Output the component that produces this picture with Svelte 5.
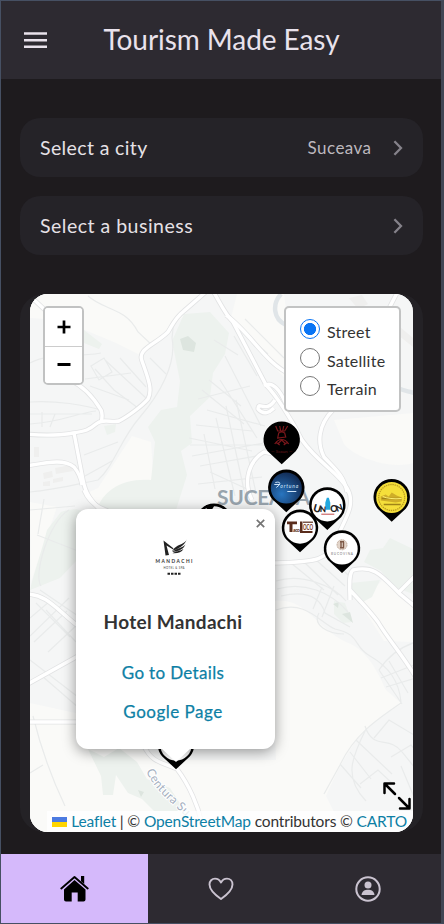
<script>
  const pins = [
    { x: 214, y: 522, kind: 'plain' },
    { x: 176, y: 745, kind: 'plain' },
    { x: 281.7, y: 440, kind: 'crown' },
    { x: 286.3, y: 488, kind: 'blue' },
    { x: 391.7, y: 497.5, kind: 'gold' },
    { x: 327.3, y: 505.7, kind: 'union' },
    { x: 300, y: 528, kind: 'taco' },
    { x: 342, y: 548.8, kind: 'hotel' }
  ];
  const casing = [
    'M26 434C45 436 64 435 73 433C86 431 89 430 96 424C103 418 111 423 119 421C127 417 141 407 148 399C153 390 148 378 142 361C137 349 155 345 168 332C173 324 175 318 184 311L208 290',
    'M70 380C83 386 92 395 101 410C103 415 102 419 101 422M74 433L83 480C86 496 91 500 109 520M26 466C50 462 64 459 74 467C79 473 81 479 82 485',
    'M26 594C47 594 57 610 78 626M26 685L78 656M26 722H82M30 296L45 310',
    'M210 286C219 300 224 313 233 322L266 385C276 395 292 420 302 440C318 463 338 472 347 488C357 505 344 520 336 540C327 560 318 562 275 563',
    'M226 315C250 332 266 364 290 374L320 405M333 410C318 425 317 443 324 457C334 468 344 475 347 492M264 386C272 380 280 390 286 404M275 400C266 414 258 400 258 409C264 416 270 412 274 408',
    'M252 500C242 480 250 460 264 452L285 456M350 600C350 588 348 574 353 570C375 565 382 576 400 594L418 609M350 590C362 603 370 611 378 622C388 639 405 658 418 681M399 592L416 575',
    'M144 746C152 763 162 762 177 769C190 786 198 807 201 820M382 322L398 291M84 490C88 500 95 507 108 511'
  ];
  const lanes = [
    'M88 296C105 311 125 307 138 332L153 346M174 320L172 338C177 364 159 395 140 417C120 440 114 466 98 480C78 484 54 490 30 492',
    'M30 402C54 400 86 405 104 411M30 414H92M30 424C62 422 77 413 96 411M42 412V427M55 414L50 427M84 455L118 442M85 476L112 461M95 369L114 390L138 408M105 360L146 398M85 379L131 373M91 366L104 358L112 372L99 380Z',
    'M30 363C51 352 73 358 101 353M120 358L146 387M90 386L129 400M150 358L166 374M30 510L75 506M37 535L78 551M44 499L38 534M41 586C33 575 49 521 69 510',
    'M40 590L78 616M36 603L70 637M30 618L50 601M30 636L69 598M34 642L67 611M48 652L78 624M30 660L78 697M42 676L79 708M46 610L76 642M33 716C43 757 54 783 65 806M30 773L43 765',
    'M190 445H280M192 456L264 443M200 466L268 454M198 484L262 477M204 434L215 489M216 418L235 496M226 406L245 495M236 400L256 493M196 425L252 431M189 438L252 451M207 410L265 426M210 472L258 494',
    'M220 380L257 438M225 356L261 426M198 399L250 386M209 380L241 406M202 390L244 424M234 336L257 376M237 326L268 354M245 319L284 358M214 340L238 355',
    'M276 581C302 573 334 586 346 601M277 589C304 581 331 592 348 612M281 596C307 590 320 597 325 613L350 627M291 563L324 590M304 562L338 595M315 559L345 586M323 550L348 575M322 587L313 609M334 586L322 617',
    'M276 610C306 599 320 623 335 629C362 635 352 646 370 656C389 667 399 681 401 702M319 613C312 625 328 634 344 634M379 670C389 655 403 646 416 642M379 670L402 704M389 661L408 693M381 678L414 665M386 687L416 678',
    'M401 703C376 720 354 735 340 765L324 794M365 726C373 751 389 735 402 752L420 774M366 729C352 757 343 777 366 801M356 740L392 774M350 752L371 779M340 764L361 788M374 738L389 720L414 735M391 757L411 745L419 754M401 766L414 797M360 784L378 770L394 785'
  ];
  const choices = ['Street', 'Satellite', 'Terrain'];
  let layer = $state('Street');
</script>

{#snippet chevron()}
  <svg class="chev" viewBox="0 0 10 16" width="10" height="16"><path d="M1.400 1.200 8 8l-6.600 6.800" fill="none" stroke="#85828a" stroke-width="2.300" /></svg>
{/snippet}

<div class="app">
  <header>
    <svg width="23" height="16" viewBox="0 0 23 16"><path d="M0 1.500H23M0 8.200H23M0 14.800H23" stroke="#e9e2ec" stroke-width="2.400" /></svg>
    <h1>Tourism Made Easy</h1>
  </header>

  <main>
    <button class="row"><span class="label city">Select a city</span><span class="value">Suceava</span>{@render chevron()}</button>
    <button class="row"><span class="label biz">Select a business</span>{@render chevron()}</button>

    <section class="card">
      <div class="map">
        <svg class="tiles" viewBox="30 294 383 538" width="383" height="538">
          <defs>
            <radialGradient id="sea" cx=".35" cy=".7" r=".8"><stop offset="0" stop-color="#2875c0" /><stop offset="1" stop-color="#10254b" /></radialGradient>
          </defs>
          <rect x="30" y="294" width="383" height="538" fill="#f5f6f6" />
          <g fill="#fafaf8">
            <path d="M84 294H204L170 330L140 355L116 343L85 330L60 320L30 318V294Z" />
            <path d="M98 488L132 436L151 442L154 487L122 488L99 509L83 495Z" />
            <path d="M237 294H284L296 390L258 350L231 318Z" />
            <path d="M334 420L413 413V463C390 470 354 457 344 444Z" />
            <path d="M270 602C305 594 313 626 346 642C369 650 379 676 386 690L402 704C371 720 351 738 326 796L344 832H30V703L80 714L160 760H276Z" />
            <path d="M361 605L382 580L413 602V642L384 641Z" />
            <path d="M30 502L57 507L31 582Z" />
          </g>
          <g fill="#edf2ee">
            <path d="M184 314L210 312L229 333L225 354L213 373L210 397L190 416L192 443L181 451L187 475L176 510H97C102 492 121 478 151 480L155 442L148 427L161 410L177 407L180 381L172 341Z" />
            <path d="M61 512C82 505 89 511 86 533L77 560L60 578L30 590C36 566 42 550 47 530Z" />
            <path d="M364 562L370 550L383 548L390 538L413 549V594L394 587L381 571Z" />
            <path d="M350 583L380 580L372 597L359 604L350 592Z" />
            <path d="M88 749L104 757L119 748L137 762L147 779L170 788L185 811H154L142 799L128 793L116 775L113 795H103L101 776Z" />
            <path d="M84 330L102 344L99 349L84 343ZM104 426L116 424L115 432L107 435ZM334 601L345 603L352 622L343 623L334 614Z" />
          </g>
          <path d="M180 339L188 336L196 343L194 352L183 350ZM342 614L350 612L353 623ZM333 604L339 602L338 608ZM138 790L144 792L141 797Z" fill="#dde5df" />
          <path d="M281 294C272 304 273 319 286 325M398 388C404 391 408 391 414 393" fill="none" stroke="#e0e5e8" stroke-width="4.500" />
          <g fill="#efefee"><path d="M34 447h5v10h-5zM43 473l9-2 1 6-9 2zM55 468l16-3 2 6-17 3zM43 482l7-1v5h-7zM53 479l10-2v4l-10 2zM400 327l13 11v9l-15-12zM349 298l13-3 6 9-10 5z" /></g>
          <g fill="none" stroke="#e9ebeb" stroke-width="1.200">{#each lanes as d}<path {d} />{/each}</g>
          <g fill="none" stroke="#e2e3e4" stroke-width="5" stroke-linejoin="round">{#each casing as d}<path {d} />{/each}</g>
          <g fill="none" stroke="#fff" stroke-width="3.400" stroke-linejoin="round">{#each casing as d}<path {d} />{/each}</g>
          <text x="217" y="505" textLength="93" font-size="21" font-weight="700" fill="#98a4ad">SUCEAVA</text>
          <path id="ring" d="M146 771C154 789 167 799 192 822" fill="none" />
          <text font-size="12" fill="#a5afc0" stroke="#fff" stroke-width="2" paint-order="stroke" letter-spacing=".3"><textPath href="#ring">Centura Su</textPath></text>

          {#each pins as p}
            <g transform="translate({p.x} {p.y})">
              <path d="M-14 11.300 0 24.200 14 11.300A18.200 18.200 0 1 0-14 11.300Z" fill="#000" />
              {#if p.kind === 'crown'}
                <g fill="none" stroke="#7a171b" stroke-width="1.200"><path d="M-6-14-4-9H3L6-14M-2-14-1-9M2-14 1-9M-3-7Q0-9 3-7L4-3-4-2ZM-7 4C-3-2 3-2 7 4M-4 4 0 0 4 4M-6 2-2 5M2 5 6 2" /></g>
                <text y="13" text-anchor="middle" font-size="4.500" fill="#6d171b">— Scaun —</text>
              {:else if p.kind === 'blue'}
                <circle r="15.500" fill="url(#sea)" />
                <path d="M-12-3.500H-7M-11-5.500Q-5-7-7-3L-10-.5M1 3.500H10" stroke="#cfe5fa" fill="none" />
                <text x="3" y="-.5" text-anchor="middle" font-size="5" font-style="italic" textLength="18" fill="#d9ebfc">ortuna</text>
              {:else if p.kind === 'gold'}
                <circle r="15.500" fill="#f5df3a" />
                <circle r="13" fill="none" stroke="#bd9f20" stroke-width="1.300" stroke-dasharray="1.400 .8" />
                <path d="M-11 3V-1L-6-3-3-1 0-5 5-2 10 0V4L4 5Z" fill="#cfae28" /><path d="M-10 1H10M-8 7H9" stroke="#a08418" stroke-width="1.300" /><path d="M-9-1Q-2 2 10 1" stroke="#fff176" fill="none" />
              {:else if p.kind === 'union'}
                <circle r="15.700" fill="#fff" />
                <path d="M-2 4V-3L-.5-8H1.500L3-3V4Z" fill="#22a8df" />
                <g font-size="10.500" font-weight="900" fill="#222" text-anchor="middle">
                  <text transform="translate(-11 6.500) rotate(16)">U</text><text transform="translate(-4.500 6.500) rotate(3)" font-size="8">N</text><text transform="translate(6.500 6)" font-size="9">O</text><text transform="translate(13 5) rotate(-20)" font-size="9">N</text>
                </g>
                <path d="M-6 8.500H7" stroke="#c24c4c" stroke-width="1" />
              {:else if p.kind === 'taco'}
                <circle r="15.700" fill="#fff" />
                <path d="M-13-6.500H-3V-3.800H-13ZM-10.500-4H-7.500V4H-10.500ZM0-6.500H2.500V3H12.500V5H0Z" fill="#5a2d1c" />
                <text x="-7" y="3.500" font-size="5" font-weight="900" textLength="7" fill="#5a2d1c">aco</text>
                <text x="3" y="1.500" font-size="7.500" font-weight="900" textLength="10" lengthAdjust="spacingAndGlyphs" fill="#7b3d2a">OCO</text>
                <path d="M3-5.800H13" stroke="#5a2d1c" stroke-width="1.200" />
              {:else if p.kind === 'hotel'}
                <circle r="15.700" fill="#fff" />
                <circle cy="-4" r="5" fill="#e3d5ca" stroke="#b8a08e" stroke-dasharray="1 .7" /><path d="M-2-7H2M-2-1H2M-1-7V-1M1.500-7V-1" stroke="#7d5846" stroke-width="1.400" />
                <text y="6.500" text-anchor="middle" font-size="3.200" textLength="22" fill="#777">BUCOVINA</text>
              {:else}
                <circle r="15.700" fill="#fff" />
                <path d="M-8-14Q-3-9 0-15.700L-2-17H-8Z" fill="#000" />
              {/if}
            </g>
          {/each}
        </svg>

        <div class="zoomer">
          <button aria-label="Zoom in"><svg width="14" height="14" viewBox="0 0 14 14"><path d="M.5 7H13.500M7 .5V13.500" stroke="#000" stroke-width="2.700" /></svg></button>
          <button aria-label="Zoom out"><svg width="14" height="14" viewBox="0 0 14 14"><path d="M.5 6.500H13.500" stroke="#000" stroke-width="2.800" /></svg></button>
        </div>

        <div class="layers">
          {#each choices as c}
            <label><input type="radio" name="layer" value={c} bind:group={layer} /><span>{c}</span></label>
          {/each}
        </div>

        <article class="popup">
          <svg class="close" width="9" height="9" viewBox="0 0 9 9"><path d="M.8.8 8.200 8.200M8.200.8.8 8.200" stroke="#757575" stroke-width="1.700" /></svg>
          <svg class="logo" width="40" height="38" viewBox="0 0 40 38">
            <path d="M9.500 1.500 19 9 20 11 12.500 6.500 15 16 11.500 16.500ZM33 0C31 5 25 5 20.500 9L18 12C23 10 30 8 33 0ZM31.500 5.500C28 9 23 9.500 18 13 24 12.200 29 11 31.500 5.500ZM29.500 10C25 12.500 22 12 18.500 14.200 24 14.500 27.500 13.500 29.500 10Z" fill="#222" />
            <text x="1.500" y="23.700" font-size="4.800" font-weight="700" textLength="37" fill="#333">MANDACHI</text>
            <text x="9.500" y="29.500" font-size="2.800" textLength="21" fill="#444">HOTEL &amp; SPA</text>
            <path d="M13.500 34.700H27" stroke="#222" stroke-width="2" stroke-dasharray="2.500 1" />
          </svg>
          <h2>Hotel Mandachi</h2>
          <a class="details" href="#details">Go to Details</a>
          <a class="google" href="#google">Google Page</a>
          <svg class="tip" width="28" height="14" viewBox="0 0 28 14"><path d="M0 0H28L14 13Z" fill="#fff" /></svg>
        </article>

        <svg class="expand" width="28" height="28" viewBox="0 0 28 28"><path d="M1.500 11V1.500H11M2 2 12 12M16 16 26 26M17 26.500H26.500V17" fill="none" stroke="#000" stroke-width="2.500" stroke-linecap="round" stroke-linejoin="round" /></svg>

        <div class="credit">
          <svg width="15" height="10" viewBox="0 0 15 10"><path d="M0 0H15V5H0Z" fill="#4c7be1" /><path d="M0 5H15V10H0Z" fill="#ffd500" /></svg>
          <span><a href="#leaflet">Leaflet</a> | © <a href="#osm">OpenStreetMap</a> contributors © <a href="#carto">CARTO</a></span>
        </div>
      </div>
    </section>
  </main>

  <nav>
    <button class="on" aria-label="Home"><svg width="29" height="27" viewBox="0 0 29 27"><path d="M1.300 13.500 14.500 2 27.700 13.500" fill="none" stroke="#000" stroke-width="1.900" stroke-linecap="round" stroke-linejoin="round" /><path d="M21 1H24.200V9L21 6.200ZM14.500 5 25.500 14.500V24.500Q25.500 26.500 23.500 26.500H17.700V17.500H11.700V26.500H6Q4 26.500 4 24.500V14.500Z" fill="#000" /></svg></button>
    <button aria-label="Favourites"><svg width="26" height="24" viewBox="0 0 26 24"><path d="M13 22C8 18.500 1.500 13.500 1.500 7.500 1.500 4 4 1.600 7 1.600 9.600 1.600 11.800 3.200 13 5.500 14.200 3.200 16.400 1.600 19 1.600 22 1.600 24.500 4 24.500 7.500 24.500 13.500 18 18.500 13 22Z" fill="none" stroke="#cac3d0" stroke-width="1.900" stroke-linejoin="round" /></svg></button>
    <button aria-label="Profile"><svg width="26" height="26" viewBox="0 0 26 26"><circle cx="13" cy="13" r="11.700" fill="none" stroke="#cac3d0" stroke-width="2" /><circle cx="13" cy="9" r="3.500" fill="#cac3d0" /><path d="M6.500 19C7 15 10 13.800 13 13.800S19 15 19.500 19Z" fill="#cac3d0" /></svg></button>
  </nav>
</div>

<style>
  :global(body) { margin: 0; background: #1e1b1e; }
  .app { box-sizing: border-box; width: 444px; height: 924px; display: flex; flex-direction: column; border: 1px solid #465063; border-right: 3px solid #414654; background: #1e1b1e; font-family: Lato, "Noto Sans", sans-serif; overflow: hidden; }
  button { font: inherit; border: 0; margin: 0; padding: 0; }
  svg { display: block; flex: none; }
  a { color: #0d7fa5; text-decoration: none; }
  header { height: 78px; flex: none; box-sizing: border-box; display: flex; align-items: center; padding-left: 23px; background: #2d2a31; }
  h1 { margin: 0 0 2px 56.500px; font-size: 28px; font-weight: 400; line-height: 36px; color: #e9e2ec; white-space: nowrap; letter-spacing: -.07px; }
  main { flex: 1; display: flex; flex-direction: column; padding: 39px 18px 0 19px; }
  .row { height: 59px; flex: none; margin-bottom: 19px; padding: 0 20px; border-radius: 20px; background: #252328; display: flex; align-items: center; text-align: left; }
  .label { flex: 1; font-size: 19.500px; color: #e6e1e6; }
  .city { letter-spacing: .38px; }
  .biz { letter-spacing: .5px; }
  .value { font-size: 17px; color: #bdb8be; margin-right: 21.500px; letter-spacing: .45px; }
  .card { margin-top: 20px; padding: 0 10px; border-radius: 24px; background: #242226; }
  .map { position: relative; width: 383px; height: 538px; border-radius: 18px; overflow: hidden; background: #f5f6f6; }
  .zoomer { position: absolute; left: 13px; top: 12px; width: 37px; border: 2px solid #c1c2c2; border-radius: 5px; background: #fff; overflow: hidden; }
  .zoomer button { display: flex; align-items: center; justify-content: center; width: 38px; height: 38px; background: #fff; }
  .zoomer button + button { border-top: 1px solid #ccc; height: 37px; }
  .layers { position: absolute; left: 254px; top: 12px; box-sizing: border-box; width: 117px; height: 106px; padding: 11px 0 0 14px; border: 2px solid #c2c3c3; border-radius: 5px; background: #fff; }
  .layers label { display: flex; align-items: flex-start; height: 28.700px; font-size: 16px; letter-spacing: .25px; color: #333; }
  .layers input { appearance: none; box-sizing: border-box; width: 20px; height: 20px; margin: 0 7px 0 0; border: 1.500px solid #777; border-radius: 50%; background: #fff; }
  .layers input:checked { border-color: #0975f5; background: radial-gradient(circle, #0975f5 0 5.800px, #fff 6.300px); }
  .layers span { line-height: 20px; margin-top: 3px; }
  .popup { position: absolute; left: 46px; top: 215px; width: 199px; height: 240px; border-radius: 12px; background: #fff; box-shadow: 0 3px 14px rgba(0, 0, 0, .4); display: flex; flex-direction: column; align-items: center; }
  .close { position: absolute; right: 10px; top: 10px; }
  .tip { position: absolute; top: 240px; left: 86px; }
  .logo { margin: 30px 4px 0 0; }
  h2 { margin: 32px 5px 0 0; font-size: 19px; line-height: 26px; font-weight: 700; color: #333; white-space: nowrap; letter-spacing: .3px; }
  .popup a { font-size: 17px; line-height: 24px; margin-right: 5px; -webkit-text-stroke: .25px #0d7fa5; letter-spacing: .33px; }
  .popup .details { margin-top: 26px; }
  .popup .google { margin-top: 15px; letter-spacing: .5px; }
  .expand { position: absolute; left: 353px; top: 488px; }
  .credit { position: absolute; right: 0; bottom: 0; box-sizing: border-box; height: 21px; padding: 0 6px 0 5px; display: flex; align-items: center; gap: 4px; background: rgba(255, 255, 255, .8); color: #333; font-size: 15.500px; letter-spacing: -.16px; line-height: 21px; white-space: nowrap; }
  nav { height: 69px; flex: none; display: grid; grid-template-columns: repeat(3, 1fr); background: #2d2a31; }
  nav button { display: flex; align-items: center; justify-content: center; background: none; }
  nav .on { background: #d5b9fb; }
</style>
